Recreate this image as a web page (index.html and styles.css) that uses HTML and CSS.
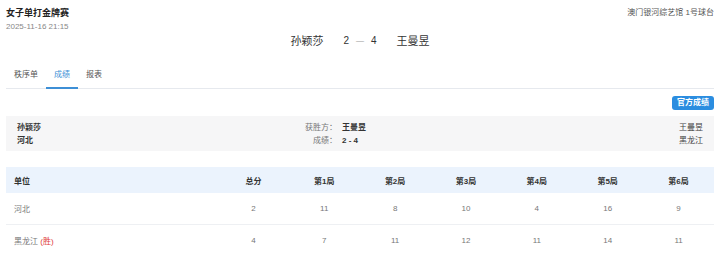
FILE: index.html
```html
<!DOCTYPE html>
<html lang="zh-CN">
  <head>
    <meta charset="utf-8" />
    <title>女子单打金牌赛</title>
    <link rel="stylesheet" href="styles.css">
  </head>
  <body>
    <div class="page">
      <div class="top">
        <div class="event">
          <div class="event-title">女子单打金牌赛</div>
          <div class="event-date">2025-11-16 21:15</div>
        </div>
        <div class="venue">澳门银河综艺馆 1号球台</div>
      </div>

      <div class="scoreline">
        <span class="player">孙颖莎</span>
        <span class="score">2</span>
        <span class="dash">—</span>
        <span class="score">4</span>
        <span class="player">王曼昱</span>
      </div>

      <div class="tabs">
        <div class="tab">秩序单</div>
        <div class="tab active">成绩</div>
        <div class="tab">报表</div>
      </div>

      <div class="actions">
        <button type="button" class="btn-official">官方成绩</button>
      </div>

      <div class="info">
        <div class="info-left strong">孙颖莎</div>
        <div class="info-label">获胜方：</div>
        <div class="info-value">王曼昱</div>
        <div class="info-right">王曼昱</div>
        <div class="info-left strong">河北</div>
        <div class="info-label">成绩：</div>
        <div class="info-value">2 - 4</div>
        <div class="info-right">黑龙江</div>
      </div>

      <table class="results">
        <thead>
          <tr>
            <th class="unit">单位</th>
            <th>总分</th>
            <th>第1局</th>
            <th>第2局</th>
            <th>第3局</th>
            <th>第4局</th>
            <th>第5局</th>
            <th>第6局</th>
          </tr>
        </thead>
        <tbody>
          <tr>
            <td class="unit">河北</td>
            <td>2</td>
            <td>11</td>
            <td>8</td>
            <td>10</td>
            <td>4</td>
            <td>16</td>
            <td>9</td>
          </tr>
          <tr>
            <td class="unit">黑龙江 <span class="win">(胜)</span></td>
            <td>4</td>
            <td>7</td>
            <td>11</td>
            <td>12</td>
            <td>11</td>
            <td>14</td>
            <td>11</td>
          </tr>
        </tbody>
      </table>
    </div>
  </body>
</html>
```

FILE: styles.css
```css
body {
  margin: 0;
  padding: 0;
  background: #fff;
  font-family: "Liberation Sans", "Noto Sans CJK SC", sans-serif;
  color: #333;
  overflow: hidden;
}

.page {
  padding: 7px 6px 0;
}

.top {
  display: flex;
  justify-content: space-between;
  align-items: flex-start;
}

.event-title {
  font-size: 9px;
  line-height: 12px;
  font-weight: bold;
  color: #222;
}

.event-date {
  margin-top: 2px;
  font-size: 8px;
  line-height: 12px;
  color: #888;
}

.venue {
  font-size: 8px;
  line-height: 12px;
  color: #555;
}

.scoreline {
  display: flex;
  justify-content: center;
  align-items: center;
  font-size: 11px;
  line-height: 16px;
  color: #333;
}

.scoreline .player {
  margin: 0 20px;
}

.scoreline .score {
  font-size: 10px;
}

.scoreline .dash {
  margin: 0 7px;
  font-size: 8px;
  color: #999;
}

.tabs {
  display: flex;
  margin-top: 13px;
  border-bottom: 1px solid #e6e9ee;
}

.tab {
  padding: 0 8px;
  font-size: 8px;
  line-height: 25px;
  color: #555;
  border-bottom: 2px solid transparent;
  margin-bottom: -1px;
}

.tab.active {
  color: #3d8fd6;
  border-bottom-color: #3d8fd6;
}

.actions {
  display: flex;
  justify-content: flex-end;
  margin-top: 7px;
}

.btn-official {
  border: none;
  border-radius: 3px;
  background: #2b8de0;
  color: #fff;
  font-family: inherit;
  font-size: 8px;
  font-weight: bold;
  line-height: 14px;
  padding: 0 5px;
}

.info {
  display: grid;
  grid-template-columns: 260px 60px 1fr auto;
  margin-top: 6px;
  padding: 5px 11px 4px;
  background: #f6f6f7;
  font-size: 8px;
  line-height: 13px;
}

.info-left {
  color: #333;
}

.info-left.strong {
  font-weight: 600;
}

.info-label {
  text-align: right;
  color: #777;
}

.info-value {
  padding-left: 5px;
  font-weight: bold;
  color: #333;
}

.info-right {
  text-align: right;
  color: #444;
}

.results {
  width: 100%;
  margin-top: 16px;
  border-collapse: collapse;
  table-layout: fixed;
  font-size: 8px;
}

.results th,
.results td {
  text-align: center;
  padding: 0;
}

.results th {
  height: 26px;
  background: #ebf3fd;
  font-weight: bold;
  color: #333;
}

.results td {
  height: 31px;
  color: #777;
  border-bottom: 1px solid #eef0f3;
}

.results .unit {
  width: 204px;
  text-align: left;
  padding-left: 8px;
}

.win {
  color: #e03b3b;
}
```
